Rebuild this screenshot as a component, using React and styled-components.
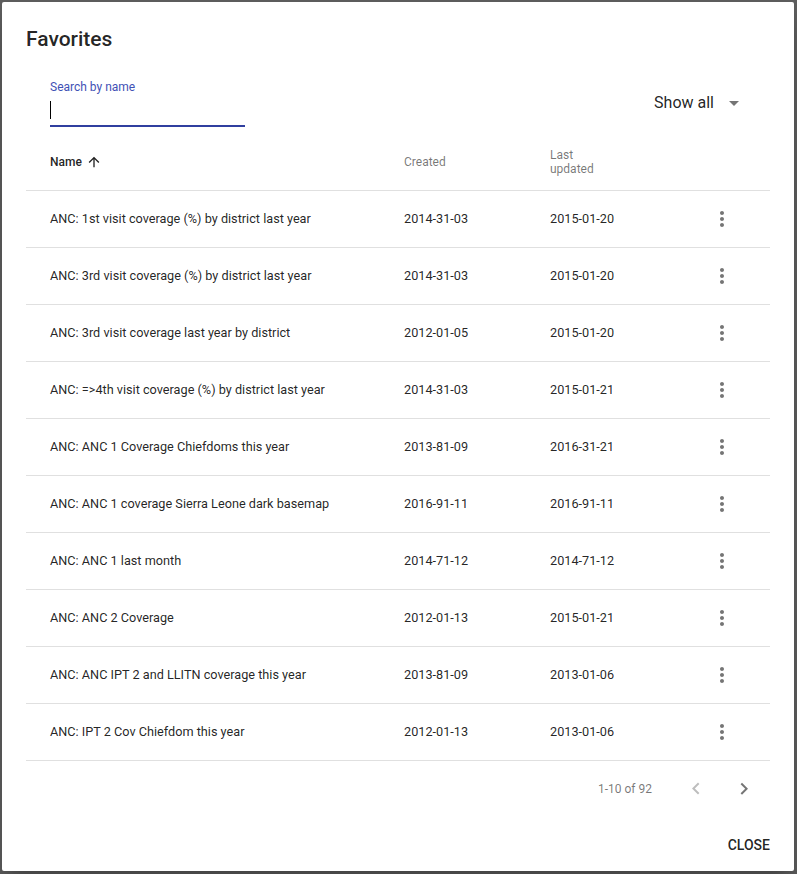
import React from "react";
import styled, { createGlobalStyle } from "styled-components";

const GlobalStyle = createGlobalStyle`
  html, body {
    margin: 0;
    padding: 0;
    background: #5e5e5e;
    font-family: Roboto, "Liberation Sans", Arial, sans-serif;
    -webkit-font-smoothing: antialiased;
  }
`;

const Backdrop = styled.div`
  width: 797px;
  height: 874px;
  padding: 2px 3px 3px 2px;
  box-sizing: border-box;
`;

const Dialog = styled.div`
  width: 792px;
  height: 869px;
  background: #fff;
  border-radius: 2px;
  box-shadow: 0 11px 15px -7px rgba(0, 0, 0, 0.2), 0 24px 38px 3px rgba(0, 0, 0, 0.14);
  display: flex;
  flex-direction: column;
  box-sizing: border-box;
`;

const Title = styled.h2`
  margin: 0;
  padding: 25px 24px 19px;
  font-size: 21px;
  line-height: 24.5px;
  font-weight: 500;
  color: rgba(0, 0, 0, 0.87);
`;

const Content = styled.div`
  padding: 0 24px 2px;
`;

const TopBar = styled.div`
  display: flex;
  align-items: center;
  justify-content: space-between;
  padding: 8px 24px 7px 24px;
`;

const Field = styled.label`
  position: relative;
  display: block;
  width: 195px;
  height: 48px;
  padding-top: 16px;
  box-sizing: border-box;
  border-bottom: 2px solid #303f9f;
`;

const FieldLabel = styled.span`
  position: absolute;
  left: 0;
  top: 2px;
  font-size: 12px;
  line-height: 12px;
  color: #3f51b5;
`;

const Input = styled.input`
  display: block;
  width: 100%;
  border: 0;
  outline: none;
  padding: 6px 0 5px;
  font: inherit;
  font-size: 16px;
  line-height: 19px;
  background: transparent;
  caret-color: transparent;
`;

const Caret = styled.span`
  position: absolute;
  left: 0;
  top: 22px;
  width: 1px;
  height: 18px;
  background: #000;
`;

const Select = styled.div`
  display: flex;
  align-items: center;
  gap: 8px;
  font-size: 16px;
  color: rgba(0, 0, 0, 0.87);
  cursor: pointer;
`;

const Grid = styled.div`
  display: grid;
  grid-template-columns: 354px 146px 1fr 72px;
  align-items: center;
  height: 57px;
  border-bottom: 1px solid #e0e0e0;
  box-sizing: border-box;
`;

const HeadCell = styled.div`
  padding-left: 24px;
  font-size: 12px;
  line-height: 14px;
  font-weight: ${(p) => (p.$active ? 500 : 400)};
  color: ${(p) => (p.$active ? "rgba(0, 0, 0, 0.87)" : "rgba(0, 0, 0, 0.54)")};
  display: flex;
  align-items: center;
  max-width: ${(p) => p.$wrap || "none"};
`;

const Cell = styled.div`
  padding-left: 24px;
  font-size: 12.7px;
  color: rgba(0, 0, 0, 0.87);
  white-space: nowrap;
`;

const ActionCell = styled.div`
  display: flex;
  justify-content: flex-start;
`;

const IconButton = styled.button`
  width: 48px;
  height: 48px;
  border: 0;
  padding: 0;
  background: transparent;
  border-radius: 50%;
  display: flex;
  align-items: center;
  justify-content: center;
  color: ${(p) => (p.disabled ? "rgba(0, 0, 0, 0.26)" : "rgba(0, 0, 0, 0.54)")};
  cursor: pointer;
`;

const SortIcon = styled.span`
  display: flex;
  margin-left: 4px;
`;

const Footer = styled.div`
  display: flex;
  align-items: center;
  justify-content: flex-end;
  height: 56px;
  padding-right: 2px;
`;

const Caption = styled.span`
  font-size: 12px;
  color: rgba(0, 0, 0, 0.54);
`;

const PageActions = styled.div`
  display: flex;
  margin-left: 20px;
`;

const Actions = styled.div`
  display: flex;
  justify-content: flex-end;
  margin: 8px 4px;
`;

const TextButton = styled.button`
  margin: 0 4px;
  min-height: 36px;
  padding: 8px 16px;
  border: 0;
  background: transparent;
  font-family: inherit;
  font-size: 14px;
  font-weight: 500;
  text-transform: uppercase;
  color: rgba(0, 0, 0, 0.87);
  border-radius: 2px;
  cursor: pointer;
`;

const Icon = ({ d, size = 24, color = "currentColor" }) => (
  <svg width={size} height={size} viewBox="0 0 24 24" fill={color}>
    <path d={d} />
  </svg>
);

const MORE = "M12 8c1.1 0 2-.9 2-2s-.9-2-2-2-2 .9-2 2 .9 2 2 2zm0 2c-1.1 0-2 .9-2 2s.9 2 2 2 2-.9 2-2-.9-2-2-2zm0 6c-1.1 0-2 .9-2 2s.9 2 2 2 2-.9 2-2-.9-2-2-2z";
const ARROW_UP = "M4 12l1.41 1.41L11 7.83V20h2V7.83l5.58 5.59L20 12l-8-8-8 8z";
const DROP = "M7 10l5 5 5-5z";
const LEFT = "M15.41 16.09l-4.58-4.59 4.58-4.59L14 5.5l-6 6 6 6z";
const RIGHT = "M8.59 16.34l4.58-4.59-4.58-4.59L10 5.75l6 6-6 6z";

const favorites = [
  ["ANC: 1st visit coverage (%) by district last year", "2014-31-03", "2015-01-20"],
  ["ANC: 3rd visit coverage (%) by district last year", "2014-31-03", "2015-01-20"],
  ["ANC: 3rd visit coverage last year by district", "2012-01-05", "2015-01-20"],
  ["ANC: =>4th visit coverage (%) by district last year", "2014-31-03", "2015-01-21"],
  ["ANC: ANC 1 Coverage Chiefdoms this year", "2013-81-09", "2016-31-21"],
  ["ANC: ANC 1 coverage Sierra Leone dark basemap", "2016-91-11", "2016-91-11"],
  ["ANC: ANC 1 last month", "2014-71-12", "2014-71-12"],
  ["ANC: ANC 2 Coverage", "2012-01-13", "2015-01-21"],
  ["ANC: ANC IPT 2 and LLITN coverage this year", "2013-81-09", "2013-01-06"],
  ["ANC: IPT 2 Cov Chiefdom this year", "2012-01-13", "2013-01-06"],
];

export default function App() {
  return (
    <>
      <GlobalStyle />
      <Backdrop>
        <Dialog>
          <Title>Favorites</Title>
          <Content>
            <TopBar>
              <Field>
                <FieldLabel>Search by name</FieldLabel>
                <Input type="text" />
                <Caret />
              </Field>
              <Select>
                Show all
                <Icon d={DROP} color="rgba(0,0,0,0.54)" />
              </Select>
            </TopBar>
            <Grid>
              <HeadCell $active>
                Name
                <SortIcon>
                  <Icon d={ARROW_UP} size={16} color="rgba(0,0,0,0.87)" />
                </SortIcon>
              </HeadCell>
              <HeadCell>Created</HeadCell>
              <HeadCell $wrap="50px">Last updated</HeadCell>
              <div />
            </Grid>
            {favorites.map(([name, created, updated]) => (
              <Grid key={name}>
                <Cell>{name}</Cell>
                <Cell>{created}</Cell>
                <Cell>{updated}</Cell>
                <ActionCell>
                  <IconButton aria-label="more">
                    <Icon d={MORE} />
                  </IconButton>
                </ActionCell>
              </Grid>
            ))}
            <Footer>
              <Caption>1-10 of 92</Caption>
              <PageActions>
                <IconButton disabled aria-label="previous">
                  <Icon d={LEFT} />
                </IconButton>
                <IconButton aria-label="next">
                  <Icon d={RIGHT} />
                </IconButton>
              </PageActions>
            </Footer>
          </Content>
          <Actions>
            <TextButton>Close</TextButton>
          </Actions>
        </Dialog>
      </Backdrop>
    </>
  );
}
